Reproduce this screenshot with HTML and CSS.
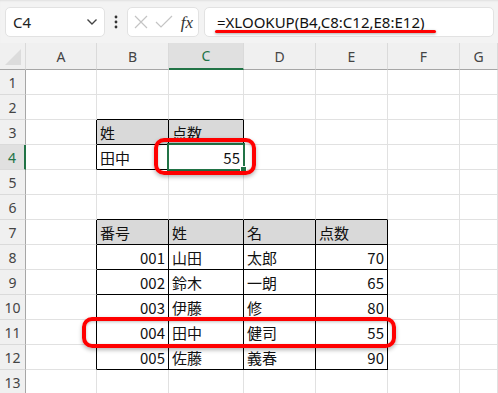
FILE: index.html
```html
<!DOCTYPE html>
<html lang="ja">
<head>
    <meta charset="UTF-8">
    <meta name="viewport" content="width=device-width, initial-scale=1.0">
    <title>XLOOKUP</title>
    <link rel="stylesheet" href="styles.css">
</head>
<body>
    <div class="formula-bar">
        <div class="name-box">
            <span>C4</span>
            <svg class="chevron" width="12" height="8" viewBox="0 0 12 8"><path d="M1.5 1.5 L6 6 L10.5 1.5" fill="none" stroke="#444" stroke-width="1.4"/></svg>
        </div>
        <div class="dots">
            <svg width="4" height="14" viewBox="0 0 4 14"><circle cx="2" cy="2" r="1.4" fill="#333"/><circle cx="2" cy="7" r="1.4" fill="#333"/><circle cx="2" cy="12" r="1.4" fill="#333"/></svg>
        </div>
        <div class="func-box">
            <svg width="14" height="14" viewBox="0 0 14 14"><path d="M1 1 L13 13 M13 1 L1 13" stroke="#c4c4c4" stroke-width="1.2"/></svg>
            <svg width="18" height="14" viewBox="0 0 18 14"><path d="M1 7 L6 12 L17 1" fill="none" stroke="#c4c4c4" stroke-width="1.2"/></svg>
            <span class="fx">fx</span>
        </div>
        <div class="formula-box">
            <span class="formula">=XLOOKUP(B4,C8:C12,E8:E12)</span>
            <div class="mark-line"></div>
        </div>
    </div>

    <div class="sheet">
        <div class="corner"><div class="tri"></div></div>
        <div class="ch">A</div><div class="ch">B</div><div class="ch sel">C</div><div class="ch">D</div><div class="ch">E</div><div class="ch">F</div><div class="ch">G</div>

        <div class="rh">1</div><div class="c"></div><div class="c"></div><div class="c"></div><div class="c"></div><div class="c"></div><div class="c"></div><div class="c"></div>
        <div class="rh">2</div><div class="c"></div><div class="c bb"></div><div class="c bb"></div><div class="c"></div><div class="c"></div><div class="c"></div><div class="c"></div>
        <div class="rh">3</div><div class="c br"></div><div class="c br bb th">姓</div><div class="c br bb th">点数</div><div class="c"></div><div class="c"></div><div class="c"></div><div class="c"></div>
        <div class="rh sel">4</div><div class="c br"></div><div class="c br bb">田中</div><div class="c br bb num active">55<div class="cursor"><div class="handle"></div></div></div><div class="c"></div><div class="c"></div><div class="c"></div><div class="c"></div>
        <div class="rh">5</div><div class="c"></div><div class="c"></div><div class="c"></div><div class="c"></div><div class="c"></div><div class="c"></div><div class="c"></div>
        <div class="rh">6</div><div class="c"></div><div class="c bb"></div><div class="c bb"></div><div class="c bb"></div><div class="c bb"></div><div class="c"></div><div class="c"></div>
        <div class="rh">7</div><div class="c br"></div><div class="c br bb th">番号</div><div class="c br bb th">姓</div><div class="c br bb th">名</div><div class="c br bb th">点数</div><div class="c"></div><div class="c"></div>
        <div class="rh">8</div><div class="c br"></div><div class="c br bb num">001</div><div class="c br bb">山田</div><div class="c br bb">太郎</div><div class="c br bb num">70</div><div class="c"></div><div class="c"></div>
        <div class="rh">9</div><div class="c br"></div><div class="c br bb num">002</div><div class="c br bb">鈴木</div><div class="c br bb">一朗</div><div class="c br bb num">65</div><div class="c"></div><div class="c"></div>
        <div class="rh">10</div><div class="c br"></div><div class="c br bb num">003</div><div class="c br bb">伊藤</div><div class="c br bb">修</div><div class="c br bb num">80</div><div class="c"></div><div class="c"></div>
        <div class="rh">11</div><div class="c br"></div><div class="c br bb num">004</div><div class="c br bb">田中</div><div class="c br bb">健司</div><div class="c br bb num">55</div><div class="c"></div><div class="c"></div>
        <div class="rh">12</div><div class="c br"></div><div class="c br bb num">005</div><div class="c br bb">佐藤</div><div class="c br bb">義春</div><div class="c br bb num">90</div><div class="c"></div><div class="c"></div>
        <div class="rh">13</div><div class="c"></div><div class="c"></div><div class="c"></div><div class="c"></div><div class="c"></div><div class="c"></div><div class="c"></div>

        <!-- red callouts drawn over the grid -->
        <div class="callout result"></div>
        <div class="callout match"></div>
    </div>
</body>
</html>
```

FILE: styles.css
```css
* {
    margin: 0;
    padding: 0;
    box-sizing: border-box;
}

body {
    width: 498px;
    height: 393px;
    overflow: hidden;
    background: #fff;
    font-family: "Noto Sans CJK JP", sans-serif;
}

.formula-bar {
    height: 43px;
    background: #f3f3f3;
    display: flex;
    align-items: flex-start;
    padding: 7px 4px 0 5px;
    box-shadow: inset 0 2px 2px -1px rgba(0,0,0,0.08);
}

.name-box,
.func-box,
.formula-box {
    height: 30px;
    background: #fff;
    border: 1px solid #e2e2e2;
    border-radius: 5px;
    display: flex;
    align-items: center;
}

.name-box {
    width: 100px;
    padding: 0 6px 0 7px;
    justify-content: space-between;
    font-family: "Noto Sans", sans-serif;
    font-size: 15px;
    color: #222;
}

.dots {
    width: 22px;
    height: 30px;
    display: flex;
    align-items: center;
    justify-content: center;
}

.func-box {
    width: 72px;
    padding: 0 5px 0 6px;
    justify-content: space-between;
}

.fx {
    font-family: "Liberation Serif", serif;
    font-style: italic;
    font-size: 17px;
    color: #333;
    line-height: 1;
}

.formula-box {
    flex: 1;
    margin-left: 5px;
    padding-left: 12px;
    position: relative;
    font-family: "Noto Sans", sans-serif;
    font-size: 15px;
    color: #111;
}

.mark-line {
    position: absolute;
    left: 10px;
    top: 22px;
    width: 221px;
    height: 3px;
    background: #f00;
    border-radius: 2px;
    box-shadow: 0 1px 3px rgba(0,0,0,0.35);
}

.sheet {
    position: relative;
    display: grid;
    grid-template-columns: 26px 71px 72px 75px 72px 72px 72px 1fr;
    grid-template-rows: 27px;
    grid-auto-rows: 25px;
}

.corner,
.ch {
    background: #f0f0f0;
    border-bottom: 1px solid #a6a6a6;
    border-right: 1px solid #dadada;
}

.corner {
    position: relative;
}

.tri {
    position: absolute;
    right: 4px;
    bottom: 4px;
    width: 0;
    height: 0;
    border-left: 16px solid transparent;
    border-bottom: 16px solid #dcdcdc;
}

.ch {
    display: flex;
    align-items: center;
    justify-content: center;
    font-family: "Noto Sans", sans-serif;
    font-size: 14px;
    color: #444;
}

.ch.sel {
    background: #e0e0e0;
    color: #217346;
    border-bottom: 2px solid #217346;
}

.rh {
    background: #f0f0f0;
    border-right: 1px solid #a6a6a6;
    border-bottom: 1px solid #dadada;
    display: flex;
    align-items: center;
    justify-content: center;
    font-family: "Noto Sans", sans-serif;
    font-size: 14px;
    color: #444;
}

.rh.sel {
    background: #e0e0e0;
    color: #217346;
    border-right: 2px solid #217346;
}

.c {
    border-right: 1px solid #e1e1e1;
    border-bottom: 1px solid #e1e1e1;
    padding: 0 3px 1px 3px;
    display: flex;
    align-items: flex-end;
    font-size: 15px;
    line-height: 20px;
    color: #111;
    white-space: nowrap;
}

.c.br {
    border-right-color: #000;
}

.c.bb {
    border-bottom-color: #000;
}

.c.th {
    background: #d9d9d9;
}

.c.num {
    justify-content: flex-end;
}

.c.active {
    position: relative;
}

.cursor {
    position: absolute;
    left: -2px;
    top: -2px;
    right: -2px;
    bottom: -2px;
    border: 2px solid #217346;
}

.handle {
    position: absolute;
    right: -4px;
    bottom: -4px;
    width: 7px;
    height: 7px;
    background: #217346;
    border: 1px solid #fff;
}

.callout {
    position: absolute;
    border: 4px solid #f00;
    border-radius: 10px;
    box-shadow: 0 2px 4px rgba(0,0,0,0.3), inset 0 1px 3px rgba(0,0,0,0.25);
}

.callout.result {
    left: 154px;
    top: 95px;
    width: 102px;
    height: 37px;
}

.callout.match {
    left: 82px;
    top: 274px;
    width: 314px;
    height: 31px;
}
```
